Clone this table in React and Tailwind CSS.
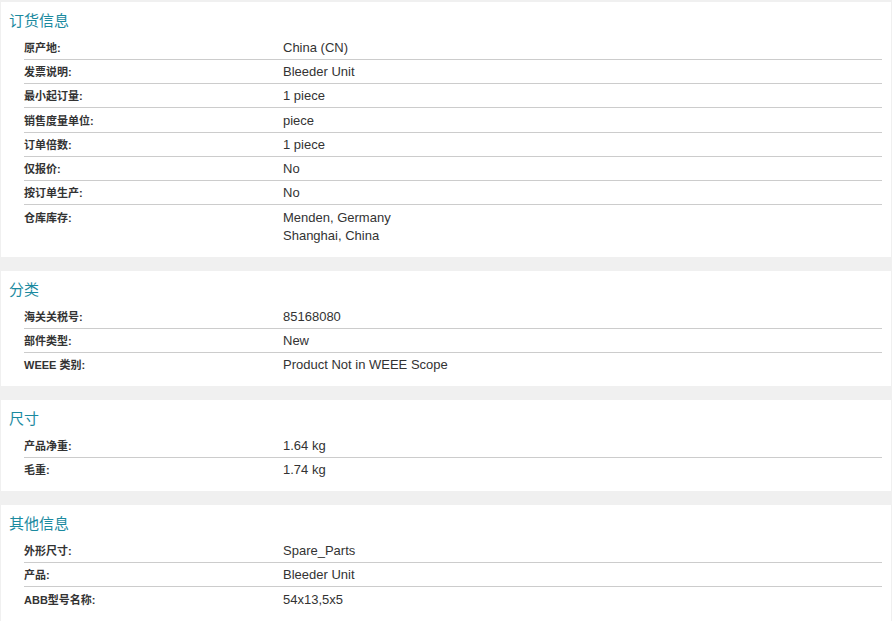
const sections = [
  {
    title: '订货信息',
    rows: [
      ['原产地:', ['China (CN)']],
      ['发票说明:', ['Bleeder Unit']],
      ['最小起订量:', ['1 piece']],
      ['销售度量单位:', ['piece']],
      ['订单倍数:', ['1 piece']],
      ['仅报价:', ['No']],
      ['按订单生产:', ['No']],
      ['仓库库存:', ['Menden, Germany', 'Shanghai, China']],
    ],
  },
  {
    title: '分类',
    rows: [
      ['海关关税号:', ['85168080']],
      ['部件类型:', ['New']],
      ['WEEE 类别:', ['Product Not in WEEE Scope']],
    ],
  },
  {
    title: '尺寸',
    rows: [
      ['产品净重:', ['1.64 kg']],
      ['毛重:', ['1.74 kg']],
    ],
  },
  {
    title: '其他信息',
    rows: [
      ['外形尺寸:', ['Spare_Parts']],
      ['产品:', ['Bleeder Unit']],
      ['ABB型号名称:', ['54x13,5x5']],
    ],
  },
];

const Section = ({ title, rows }) => (
  <div className="bg-white mb-[14px] pb-[10px]">
    <h2 className="pt-[9px] pb-[4.4px] pl-[8px] text-[15px] leading-[20px] font-normal text-[#1b8a9f]">
      {title}
    </h2>
    <div className="ml-[23px] mr-[9px]">
      {rows.map(([label, values], i) => (
        <div
          key={i}
          className={`flex pt-[3.4px] pb-[1.4px] ${i > 0 ? 'border-t border-[#cccccc]' : ''}`}
        >
          <div className="w-[259px] shrink-0 text-[11px] leading-[18.5px] font-bold text-[#333333]">
            {label}
          </div>
          <div className="text-[13px] leading-[18.5px] text-[#333333]">
            {values.map((v, j) => (
              <div key={j}>{v}</div>
            ))}
          </div>
        </div>
      ))}
    </div>
  </div>
);

export default function App() {
  return (
    <div
      className="min-h-[621px] bg-[#f0f0f0] pt-[2px] px-[1px] overflow-hidden"
      style={{ fontFamily: '"Liberation Sans", Arial, "Noto Sans CJK SC", sans-serif' }}
    >
      {sections.map((s, i) => (
        <Section key={i} {...s} />
      ))}
    </div>
  );
}
